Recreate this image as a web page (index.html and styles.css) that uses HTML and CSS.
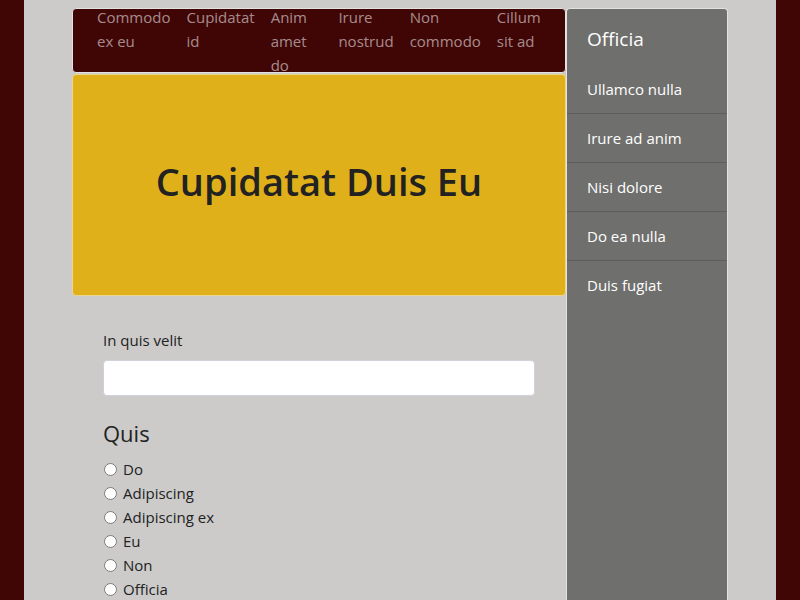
FILE: index.html
```html
<!DOCTYPE html>
<html lang="la">
<head>
<meta charset="utf-8">
<title>Cupidatat Duis Eu</title>
<link rel="stylesheet" href="styles.css">
</head>
<body>
<div class="page">
  <div class="layout">
    <main class="main">
      <nav class="topnav">
        <ul class="nav-list">
          <li class="nav-item"><a class="nav-link" href="#">Commodo ex eu</a></li>
          <li class="nav-item"><a class="nav-link" href="#">Cupidatat id</a></li>
          <li class="nav-item"><a class="nav-link" href="#">Anim amet do</a></li>
          <li class="nav-item"><a class="nav-link" href="#">Irure nostrud</a></li>
          <li class="nav-item"><a class="nav-link" href="#">Non commodo</a></li>
          <li class="nav-item"><a class="nav-link" href="#">Cillum sit ad</a></li>
        </ul>
      </nav>
      <header class="hero">
        <h1 class="hero-title">Cupidatat Duis Eu</h1>
      </header>
      <form class="form">
        <label class="field-label" for="f1">In quis velit</label>
        <input class="field-input" id="f1" type="text">
        <fieldset class="group">
          <legend class="group-title">Quis</legend>
          <label class="radio"><input type="radio" name="q"><span>Do</span></label>
          <label class="radio"><input type="radio" name="q"><span>Adipiscing</span></label>
          <label class="radio"><input type="radio" name="q"><span>Adipiscing ex</span></label>
          <label class="radio"><input type="radio" name="q"><span>Eu</span></label>
          <label class="radio"><input type="radio" name="q"><span>Non</span></label>
          <label class="radio"><input type="radio" name="q"><span>Officia</span></label>
        </fieldset>
      </form>
    </main>
    <aside class="sidebar">
      <div class="side-title">Officia</div>
      <a class="side-item" href="#">Ullamco nulla</a>
      <a class="side-item" href="#">Irure ad anim</a>
      <a class="side-item" href="#">Nisi dolore</a>
      <a class="side-item" href="#">Do ea nulla</a>
      <a class="side-item" href="#">Duis fugiat</a>
    </aside>
  </div>
</div>
</body>
</html>
```

FILE: styles.css
```css
* { box-sizing: border-box; }
html, body { margin: 0; height: 100%; }
body {
  background: #400505;
  font-family: "Open Sans", "Noto Sans", sans-serif;
  font-size: 15px;
  line-height: 24px;
  color: #222;
  overflow: hidden;
}
.page {
  width: 752px;
  margin: 0 auto;
  min-height: 100%;
  background: #cccbca;
  padding: 8px 48px 0;
}
.layout {
  display: grid;
  grid-template-columns: 494px 162px;
  align-items: start;
}
.main { min-width: 0; }
.topnav {
  display: flex;
  align-items: center;
  height: 65px;
  padding: 0 16px;
  background: #400505;
  border: 1px solid #e4e2e0;
  border-radius: 4px;
  margin-bottom: 1px;
}
.nav-list {
  display: flex;
  flex: 1;
  min-width: 0;
  margin: 0;
  padding: 0;
  list-style: none;
}
.nav-link {
  display: block;
  padding: 0 8px;
  color: rgba(255,255,255,0.55);
  text-decoration: none;
}
.hero {
  height: 222px;
  padding-bottom: 6px;
  display: flex;
  align-items: center;
  justify-content: center;
  background: #dfb01a;
  border: 1px solid #ecd68e;
  border-radius: 4px;
}
.hero-title {
  margin: 0;
  font-size: 38px;
  font-weight: 600;
  line-height: 1.2;
  color: #222;
}
.form {
  padding: 32px 31px 0;
  display: flex;
  flex-direction: column;
}
.field-label {
  color: #222;
  margin-bottom: 8px;
}
.field-input {
  height: 36px;
  border: 1px solid #cfd2da;
  border-radius: 4px;
  background: #fff;
  font: inherit;
  margin: 0 0 23px;
}
.group {
  border: 0;
  padding: 0;
  margin: 0;
  display: flex;
  flex-direction: column;
}
.group-title {
  padding: 0;
  font-size: 22px;
  line-height: 29px;
  margin-bottom: 9px;
  color: #222;
}
.radio {
  display: flex;
  align-items: center;
  height: 24px;
}
.radio input {
  width: 13px;
  height: 13px;
  margin: 0 6px 0 1px;
}
.sidebar {
  min-height: 620px;
  background: #6f6f6d;
  border: 1px solid #e4e2e0;
  border-bottom: 0;
  border-radius: 4px 4px 0 0;
  display: flex;
  flex-direction: column;
}
.side-title {
  padding: 15px 20px 11px;
  font-size: 19px;
  line-height: 30px;
  color: #fff;
}
.side-item {
  padding: 12px 20px;
  border-bottom: 1px solid #5d5d5b;
  color: #fff;
  text-decoration: none;
}
.side-item:last-child { border-bottom: 0; }
```
